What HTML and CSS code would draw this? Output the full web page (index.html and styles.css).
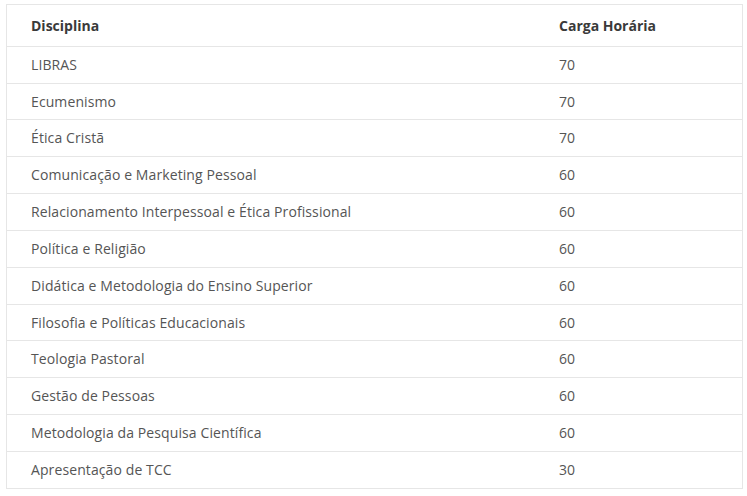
FILE: index.html
```html
<!DOCTYPE html>
<html lang="pt-BR">
<head>
<meta charset="utf-8">
<title>Disciplinas</title>
<link rel="stylesheet" href="styles.css">
</head>
<body>
<div class="wrap">
<table class="grade">
<thead>
<tr><th class="col-disc">Disciplina</th><th>Carga Horária</th></tr>
</thead>
<tbody>
<tr><td>LIBRAS</td><td>70</td></tr>
<tr><td>Ecumenismo</td><td>70</td></tr>
<tr><td>Ética Cristã</td><td>70</td></tr>
<tr><td>Comunicação e Marketing Pessoal</td><td>60</td></tr>
<tr><td>Relacionamento Interpessoal e Ética Profissional</td><td>60</td></tr>
<tr><td>Política e Religião</td><td>60</td></tr>
<tr><td>Didática e Metodologia do Ensino Superior</td><td>60</td></tr>
<tr><td>Filosofia e Políticas Educacionais</td><td>60</td></tr>
<tr><td>Teologia Pastoral</td><td>60</td></tr>
<tr><td>Gestão de Pessoas</td><td>60</td></tr>
<tr><td>Metodologia da Pesquisa Científica</td><td>60</td></tr>
<tr><td>Apresentação de TCC</td><td>30</td></tr>
</tbody>
</table>
</div>
</body>
</html>
```
FILE: styles.css
```css
html, body {
  margin: 0;
  padding: 0;
  background: #fff;
}
body {
  font-family: "Open Sans", "Liberation Sans", sans-serif;
  font-size: 14px;
  color: #555;
}
.wrap {
  padding: 4px 4px 0 6px;
}
.grade {
  width: 737px;
  border-collapse: collapse;
  border: 1px solid #e6e6e6;
}
.grade th,
.grade td {
  text-align: left;
  padding: 8px 24px;
  line-height: 19.83px;
  border-top: 1px solid #e6e6e6;
}
.grade td {
  letter-spacing: 0.1px;
}
.grade th {
  font-weight: 700;
  color: #3a3a3a;
  padding-top: 11px;
  padding-bottom: 10px;
}
.col-disc {
  width: 480px;
}
```
